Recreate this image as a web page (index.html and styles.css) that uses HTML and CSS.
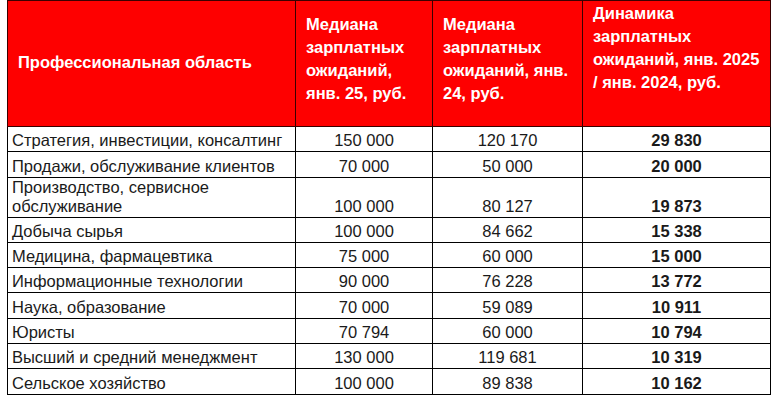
FILE: index.html
```html
<!DOCTYPE html>
<html lang="ru">
<head>
<meta charset="utf-8">
<link rel="stylesheet" href="styles.css">
</head>
<body>
<div class="wrap">
<table class="salary">
  <colgroup>
    <col class="c1"><col class="c2"><col class="c3"><col class="c4">
  </colgroup>
  <thead>
    <tr>
      <th class="h-area">Профессиональная область</th>
      <th class="h-num">Медиана зарплатных ожиданий, янв. 25, руб.</th>
      <th class="h-num">Медиана зарплатных ожиданий, янв. 24, руб.</th>
      <th class="h-dyn">Динамика зарплатных ожиданий, янв. 2025 / янв. 2024, руб.</th>
    </tr>
  </thead>
  <tbody>
    <tr><td>Стратегия, инвестиции, консалтинг</td><td class="num">150 000</td><td class="num">120 170</td><td class="num b">29 830</td></tr>
    <tr><td>Продажи, обслуживание клиентов</td><td class="num">70 000</td><td class="num">50 000</td><td class="num b">20 000</td></tr>
    <tr class="tall"><td>Производство, сервисное обслуживание</td><td class="num">100 000</td><td class="num">80 127</td><td class="num b">19 873</td></tr>
    <tr><td>Добыча сырья</td><td class="num">100 000</td><td class="num">84 662</td><td class="num b">15 338</td></tr>
    <tr><td>Медицина, фармацевтика</td><td class="num">75 000</td><td class="num">60 000</td><td class="num b">15 000</td></tr>
    <tr><td>Информационные технологии</td><td class="num">90 000</td><td class="num">76 228</td><td class="num b">13 772</td></tr>
    <tr><td>Наука, образование</td><td class="num">70 000</td><td class="num">59 089</td><td class="num b">10 911</td></tr>
    <tr><td>Юристы</td><td class="num">70 794</td><td class="num">60 000</td><td class="num b">10 794</td></tr>
    <tr><td>Высший и средний менеджмент</td><td class="num">130 000</td><td class="num">119 681</td><td class="num b">10 319</td></tr>
    <tr><td>Сельское хозяйство</td><td class="num">100 000</td><td class="num">89 838</td><td class="num b">10 162</td></tr>
  </tbody>
</table>
</div>
</body>
</html>
```
FILE: styles.css
```css
html, body {
  margin: 0;
  padding: 0;
  background: #fff;
}
.wrap {
  padding: 0 3px 0 7px;
}
.salary {
  border-collapse: collapse;
  width: 763px;
  table-layout: fixed;
  font-family: "Liberation Sans", Arial, sans-serif;
  color: #1a1a1a;
}
.c1 { width: 288px; }
.c2 { width: 137px; }
.c3 { width: 150px; }
.c4 { width: 188px; }
.salary th {
  box-sizing: border-box;
  background: #fe0000;
  color: #fff;
  font-weight: bold;
  font-size: 16.5px;
  line-height: 23px;
  text-align: left;
  border: 1px solid #3a0000;
  height: 126px;
  padding: 0 4px 9px 10px;
  vertical-align: middle;
}
.salary th.h-area {
  padding: 0 4px 2px 10px;
}
.salary th.h-dyn {
  vertical-align: top;
  padding: 1px 4px 0 10px;
}
.salary td {
  border: 1px solid #000;
  font-size: 16.5px;
  line-height: 19px;
  padding: 0 4px 1px 4px;
  vertical-align: bottom;
  box-sizing: border-box;
  height: 25.3px;
}
.salary tr.tall td {
  height: 39px;
}
.salary td.num {
  text-align: center;
}
.salary td.b {
  font-weight: bold;
}
```
